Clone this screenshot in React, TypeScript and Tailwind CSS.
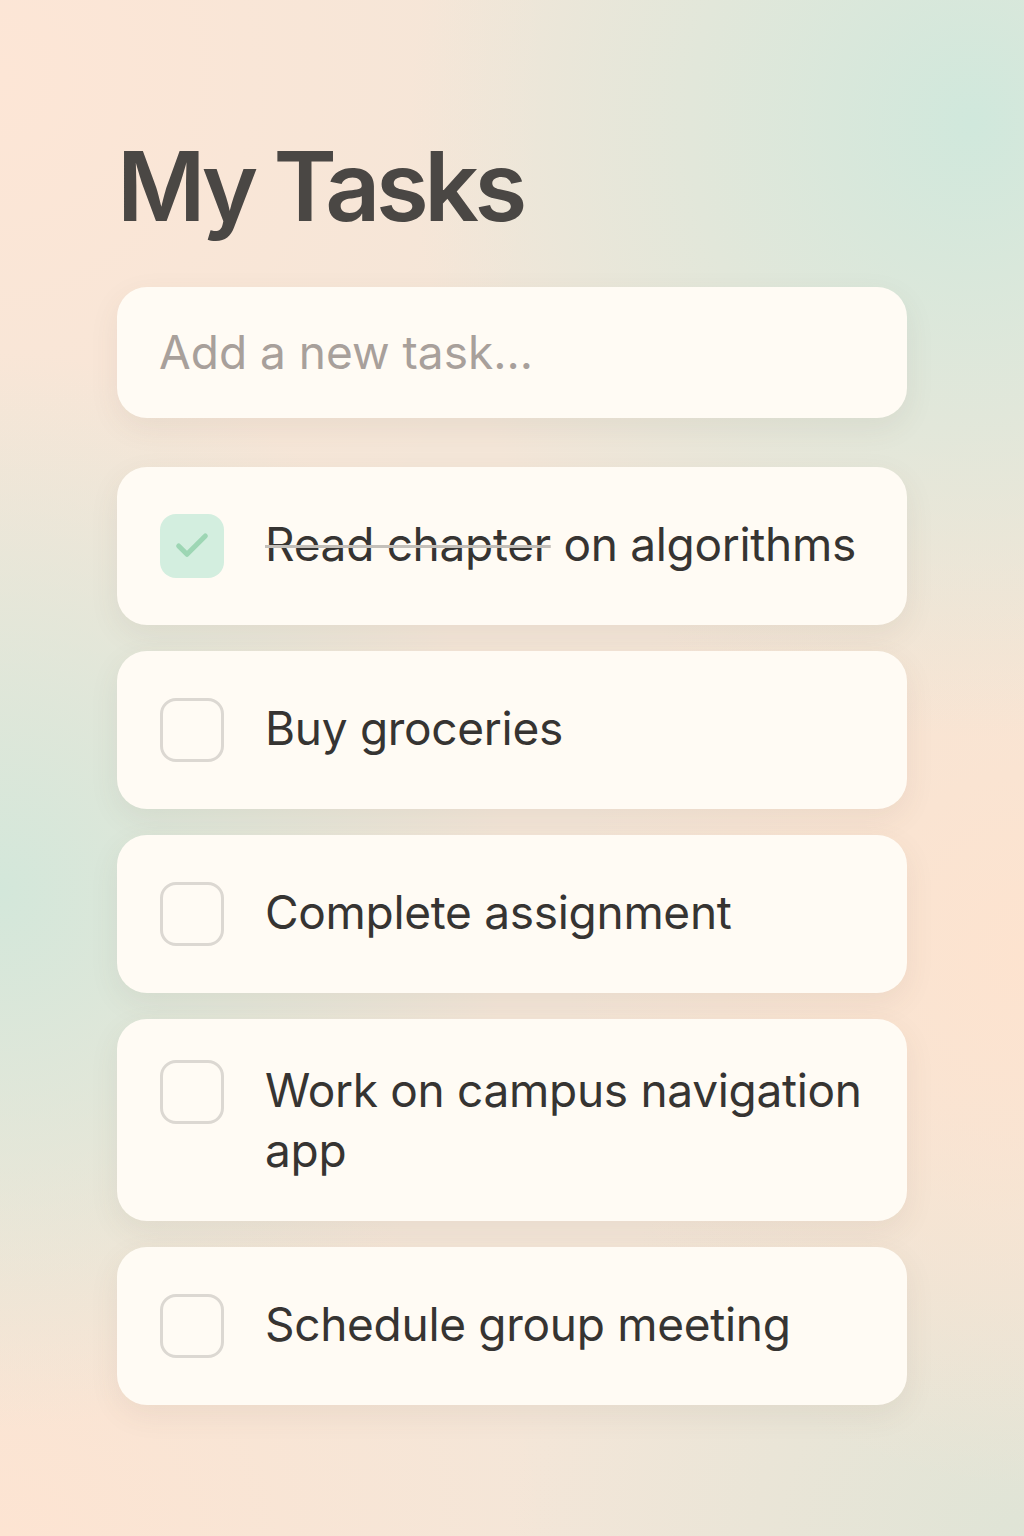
import { Check } from 'lucide-react';

const tasks = [
  { id: 1, title: 'Read chapter on algorithms', done: true },
  { id: 2, title: 'Buy groceries', done: false },
  { id: 3, title: 'Complete assignment', done: false },
  { id: 4, title: 'Work on campus navigation app', done: false },
  { id: 5, title: 'Schedule group meeting', done: false },
];

function TaskCard({ title, done }: { title: string; done: boolean }) {
  return (
    <div className="flex min-h-[158px] items-center rounded-[30px] bg-[#fffbf4] px-[43px] py-[41px] shadow-[0_10px_30px_rgba(90,80,60,0.08)]">
      <div className="flex items-start gap-[41px]">
        {done ? (
          <div className="flex h-[64px] w-[64px] shrink-0 items-center justify-center rounded-[16px] bg-[#d3eedf]">
            <Check className="h-[40px] w-[40px] text-[#9dd6b4]" strokeWidth={3} />
          </div>
        ) : (
          <div className="h-[64px] w-[64px] shrink-0 rounded-[16px] border-[3px] border-[#dcd8d2]" />
        )}
        <p className="text-[46px] leading-[60px] tracking-[-0.3px] text-[#363432]">
          {done ? (
            <>
              <span className="line-through decoration-[#c4c0ba] decoration-[3px]">Read chapter</span> on algorithms
            </>
          ) : (
            title
          )}
        </p>
      </div>
    </div>
  );
}

export default function App() {
  return (
    <div className="min-h-[1536px] w-full bg-[#f4e6d8] bg-[radial-gradient(ellipse_55%_40%_at_95%_8%,#d0e8dc_0%,rgba(208,232,220,0)_100%),radial-gradient(ellipse_50%_35%_at_0%_58%,#d3e7da_0%,rgba(211,231,218,0)_100%),radial-gradient(ellipse_45%_35%_at_100%_62%,#fde3cf_0%,rgba(253,227,207,0)_100%),radial-gradient(ellipse_50%_30%_at_100%_100%,#dfe4d6_0%,rgba(223,228,214,0)_100%),radial-gradient(ellipse_55%_40%_at_0%_5%,#fde6d6_0%,rgba(253,230,214,0)_100%),radial-gradient(ellipse_55%_30%_at_0%_100%,#fde4d2_0%,rgba(253,228,210,0)_100%)] font-['Inter','Liberation_Sans',sans-serif]">
      <div className="mx-auto w-[790px] pt-[126px]">
        <h1 className="text-[96px] font-semibold leading-[120px] tracking-[-4.5px] text-[#4a4744]">My Tasks</h1>

        <div className="mt-[41px] flex h-[131px] items-center rounded-[30px] bg-[#fffbf4] px-[42px] shadow-[0_10px_30px_rgba(90,80,60,0.08)]">
          <input
            type="text"
            placeholder="Add a new task..."
            className="w-full bg-transparent text-[46px] text-[#363432] outline-none placeholder:text-[#a8a09b]"
          />
        </div>

        <div className="mt-[49px] flex flex-col gap-[26px] pb-[130px]">
          {tasks.map((t) => (
            <TaskCard key={t.id} title={t.title} done={t.done} />
          ))}
        </div>
      </div>
    </div>
  );
}
